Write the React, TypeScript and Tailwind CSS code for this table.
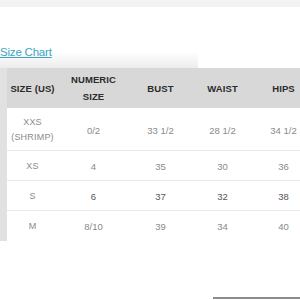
import React from 'react';

const ROWS = [
  { size: ['XXS', '(SHRIMP)'], numeric: '0/2', bust: '33 1/2', waist: '28 1/2', hips: '34 1/2' },
  { size: ['XS'], numeric: '4', bust: '35', waist: '30', hips: '36' },
  { size: ['S'], numeric: '6', bust: '37', waist: '32', hips: '38', dark: true },
  { size: ['M'], numeric: '8/10', bust: '39', waist: '34', hips: '40' },
];

const WIDTHS = ['w-[51px]', 'w-[71px]', 'w-[63px]', 'w-[61px]', 'w-[61px]'];

const App: React.FC = () => {
  return (
    <div className="w-[300px] h-[300px] overflow-hidden bg-white relative font-['Liberation_Sans',Arial,sans-serif]">
      <div className="h-[7px] bg-[#f3f3f3]" />

      <div className="relative z-10 mt-[38px] h-[16px] text-[11.5px] leading-[14px] text-[#3ba7c1] underline decoration-[#3ba7c1] tracking-[-0.2px]">
        Size Chart
      </div>

      <div className="mt-[-9px] h-[16px] w-[198px] bg-gradient-to-b from-white to-[#ececec]" />

      <div className="flex">
        <div className="w-[7px] h-[173px] bg-[#e1e1e1] shrink-0" />
        <div className="w-[307px] shrink-0">
          <div className="flex h-[40px] bg-[#d8d8d8] text-[#2b2b2b] text-[9.5px] font-bold tracking-[0.1px] leading-[17px]">
            <div className={`${WIDTHS[0]} flex items-center justify-center whitespace-nowrap`}>SIZE (US)</div>
            <div className={`${WIDTHS[1]} flex flex-col items-center justify-center`}>
              <span>NUMERIC</span>
              <span>SIZE</span>
            </div>
            <div className={`${WIDTHS[2]} flex items-center justify-center`}>BUST</div>
            <div className={`${WIDTHS[3]} flex items-center justify-center`}>WAIST</div>
            <div className={`${WIDTHS[4]} flex items-center justify-center`}>HIPS</div>
          </div>

          {ROWS.map((row, i) => (
            <div
              key={i}
              className={`flex pt-[2px] text-[9.5px] leading-[15px] ${row.dark ? 'text-[#555]' : 'text-[#8a8a8a]'} ${
                i === 0 ? 'h-[43px]' : i === 3 ? 'h-[29px]' : 'h-[30px]'
              } ${i < 3 ? 'border-b border-[#e8e8e8]' : ''}`}
            >
              <div className={`${WIDTHS[0]} flex flex-col items-center justify-center text-[#8a8a8a] text-[9px] tracking-[0.2px]`}>
                {row.size.map((s) => (
                  <span key={s}>{s}</span>
                ))}
              </div>
              <div className={`${WIDTHS[1]} flex items-center justify-center`}>{row.numeric}</div>
              <div className={`${WIDTHS[2]} flex items-center justify-center`}>{row.bust}</div>
              <div className={`${WIDTHS[3]} flex items-center justify-center`}>{row.waist}</div>
              <div className={`${WIDTHS[4]} flex items-center justify-center`}>{row.hips}</div>
            </div>
          ))}
        </div>
      </div>

      <div className="absolute left-[213px] bottom-[1px] w-[87px] h-[2px] bg-[#8c8c8c]" />
    </div>
  );
};

export default App;
